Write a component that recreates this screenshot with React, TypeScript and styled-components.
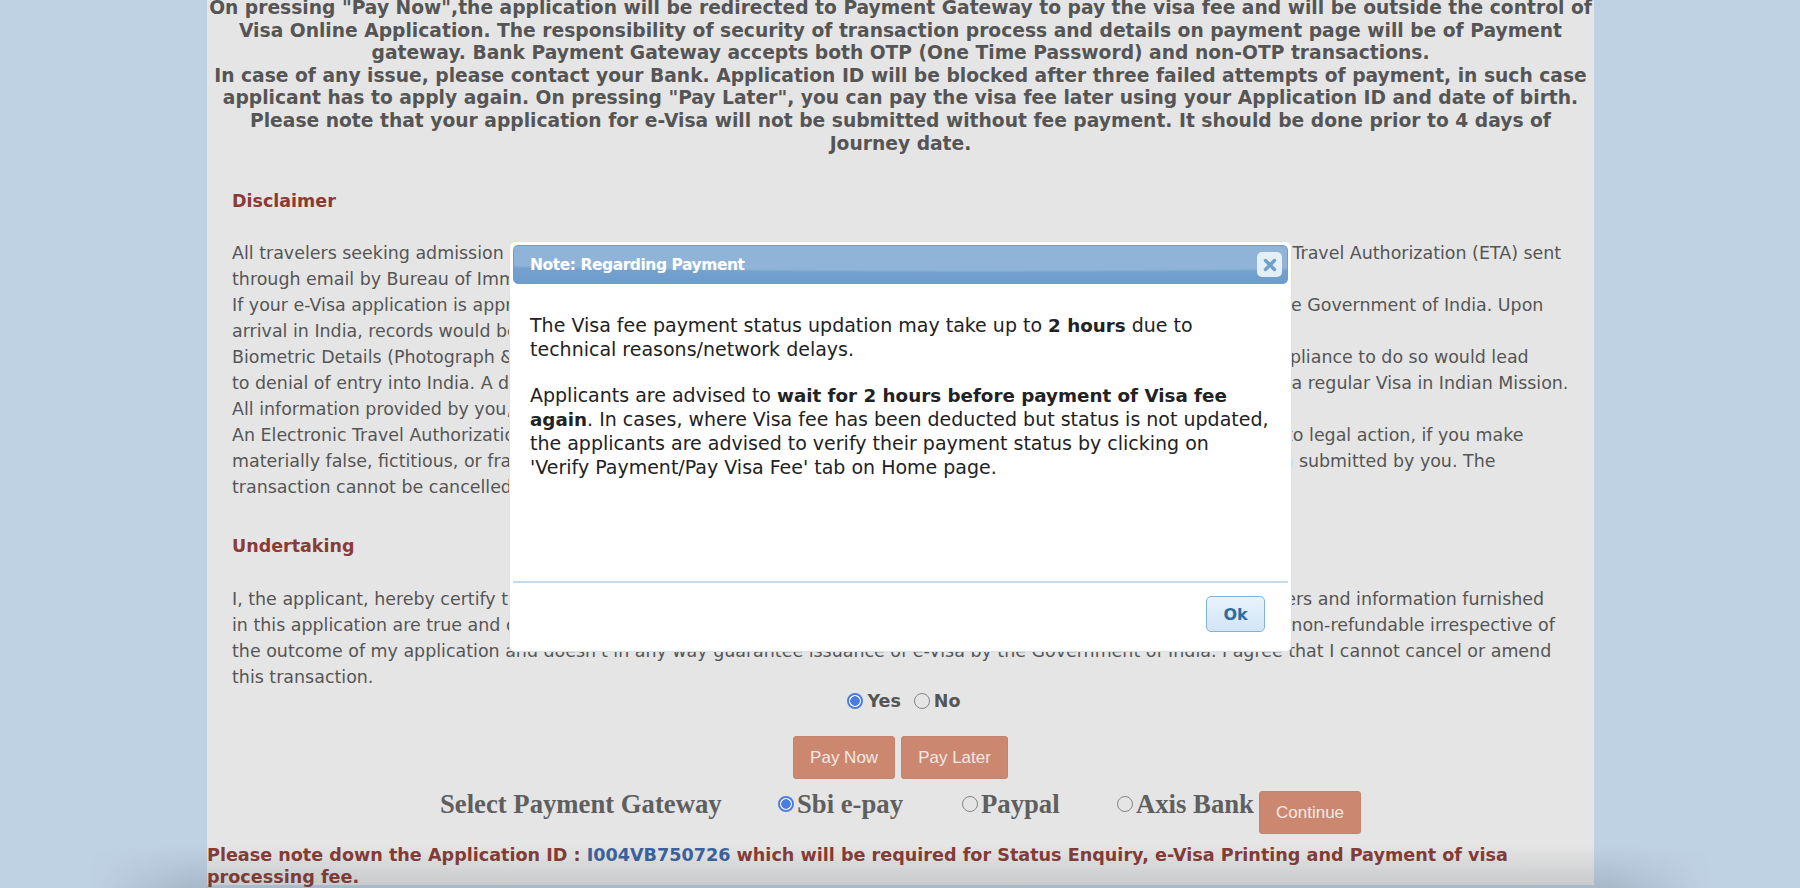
import * as React from 'react';
import styled, { createGlobalStyle } from 'styled-components';
import { X } from 'lucide-react';

const Global = createGlobalStyle`
html, body {
    margin: 0;
    height: 888px;
    overflow: hidden;
    background: #bfd2e4;
}
#root {
    height: 888px;
}
`;

const Page = styled.div`
position: relative;
height: 888px;
overflow: hidden;
font-family: "DejaVu Sans", Verdana, sans-serif;
`;

const Panel = styled.div`
width: 1387px;
height: 888px;
margin-left: 207px;
background: #e5e5e5;
color: #555;
`;

const Notice = styled.p`
margin: -3px 0 0;
font-size: 18.7px;
font-weight: bold;
line-height: 22.6px;
text-align: center;
white-space: nowrap;
`;

const Section = styled.div`
padding: 0 25px;
`;

const Heading = styled.h3<{ $top: number }>`
margin: ${p => p.$top}px 0 0;
font-size: 17.5px;
font-weight: bold;
line-height: 26px;
color: #8b3a34;
`;

const Copy = styled.p<{ $top: number }>`
margin: ${p => p.$top}px 0 0;
font-size: 17.45px;
line-height: 26px;
white-space: nowrap;
`;

const Consent = styled.div`
display: flex;
justify-content: center;
align-items: center;
gap: 13px;
margin: -2px 0 0 7px;
height: 26px;
font-size: 17.5px;
font-weight: bold;
`;

const Radio = styled.input.attrs({ type: 'radio' })`
appearance: none;
box-sizing: border-box;
width: 16px;
height: 16px;
margin: 0;
border: 1.5px solid #858585;
border-radius: 50%;
background: transparent;

&:checked {
    border: 2px solid #4a7de0;
    background: radial-gradient(circle, #4a7de0 0 4.5px, #fff 5px);
}
`;

const ConsentItem = styled.label`
display: flex;
align-items: center;
gap: 4px;
`;

const Actions = styled.div`
display: flex;
justify-content: center;
gap: 6px;
margin: 22px 0 0 0;
`;

const ActionButton = styled.button`
height: 43px;
padding: 0 16px;
border: 1px solid #c4836d;
border-radius: 3px;
background: #cc8770;
color: #f3e9e4;
font-family: "Liberation Sans", Arial, sans-serif;
font-size: 17px;
`;

const ContinueButton = styled(ActionButton)`
margin-top: 1px;
`;

const Gateway = styled.div`
display: flex;
align-items: flex-start;
height: 43px;
margin-top: 11px;
padding-left: 233px;
font-family: "Liberation Serif", Georgia, serif;
font-size: 26.7px;
font-weight: bold;
color: #5f5f5f;
`;

const GatewayLabel = styled.span`
width: 338px;
line-height: 28px;
`;

const GatewayOption = styled.label<{ $width: number }>`
display: flex;
align-items: center;
gap: 3px;
width: ${p => p.$width}px;
height: 28px;
`;

const IdNote = styled.p`
margin: 11px 0 0;
font-size: 17.6px;
font-weight: bold;
line-height: 22px;
color: #863c36;
white-space: nowrap;
`;

const AppId = styled.span`
color: #3a639e;
`;

const DockShade = styled.div`
position: absolute;
left: 90px;
right: 90px;
bottom: 0;
height: 42px;
background: linear-gradient(to bottom, rgba(50, 60, 70, 0), rgba(50, 60, 70, 0.17));
mask-image: linear-gradient(to right, transparent 0, #000 100px, #000 calc(100% - 100px), transparent 100%);
pointer-events: none;
`;

const Modal = styled.div`
position: absolute;
left: 509px;
top: 241px;
width: 783px;
height: 411px;
box-sizing: border-box;
padding: 3px;
background: #fff;
border: 1px solid #d5e4f0;
border-radius: 6px;
color: #222;
`;

const ModalHeader = styled.div`
display: flex;
align-items: center;
justify-content: space-between;
height: 39px;
padding: 0 5px 0 16px;
border: 1px solid #6f9ccb;
border-radius: 5px;
box-sizing: border-box;
background:
    radial-gradient(ellipse 110% 72% at 60% 0, #8fb4d8 0 90%, rgba(143, 180, 216, 0) 100%),
    linear-gradient(to bottom, #7ca8d1, #6f9dcc);
color: #fff;
font-size: 15.5px;
font-weight: bold;
letter-spacing: -0.45px;
`;

const CloseButton = styled.button`
display: flex;
align-items: center;
justify-content: center;
width: 25px;
height: 25px;
padding: 0;
border: 0;
border-radius: 5px;
background: #e4eff8;
color: #6f9fce;
`;

const ModalBody = styled.div`
height: 299px;
box-sizing: border-box;
padding: 29px 15px 0 17px;
border-bottom: 2px solid #c5dbec;
font-size: 19px;
line-height: 24px;
white-space: nowrap;

b {
    font-size: 18.3px;
    line-height: 1;
}
`;

const ModalText = styled.p`
margin: 0 0 22px;
`;

const ModalFooter = styled.div`
display: flex;
justify-content: flex-end;
padding: 13px 23px 0 0;
`;

const OkButton = styled.button`
width: 59px;
height: 36px;
padding: 0;
border: 1px solid #7fb0e2;
border-radius: 5px;
background: linear-gradient(to bottom, #e8f2fb, #d3e5f6);
color: #2e6e9e;
font-family: "DejaVu Sans", Verdana, sans-serif;
font-size: 16px;
font-weight: bold;
`;

const App: React.FC = () => {
    return (
        <Page>
            <Global />
            <Panel>
                <Notice>
                    On pressing "Pay Now",the application will be redirected to Payment Gateway to pay the visa fee and will be outside the control of<br />
                    Visa Online Application. The responsibility of security of transaction process and details on payment page will be of Payment<br />
                    gateway. Bank Payment Gateway accepts both OTP (One Time Password) and non-OTP transactions.<br />
                    In case of any issue, please contact your Bank. Application ID will be blocked after three failed attempts of payment, in such case<br />
                    applicant has to apply again. On pressing "Pay Later", you can pay the visa fee later using your Application ID and date of birth.<br />
                    Please note that your application for e-Visa will not be submitted without fee payment. It should be done prior to 4 days of<br />
                    Journey date.
                </Notice>
                <Section>
                    <Heading $top={33}>Disclaimer</Heading>
                    <Copy $top={26}>
                        All travelers seeking admission to India are required to possess a valid ordinary passport and also an e-Visa or Electronic Travel Authorization (ETA) sent<br />
                        through email by Bureau of Immigration, Ministry of Home Affairs, Government of India.<br />
                        If your e-Visa application is approved, it will be valid for the total visa period granted subject to the rules and orders of the Government of India. Upon<br />
                        arrival in India, records would be checked by the immigration officer at the port of entry.<br />
                        Biometric Details (Photograph &amp; fingerprints) of the travelers shall be captured at the immigration check posts. Non compliance to do so would lead<br />
                        to denial of entry into India. A denied traveler will be sent back on the same flight to country of origin and may apply for a regular Visa in Indian Mission.<br />
                        All information provided by you, or on your behalf, must be true and correct.<br />
                        An Electronic Travel Authorization does not guarantee entry and it may be revoked at all times, and you may be subject to legal action, if you make<br />
                        materially false, fictitious, or fraudulent statements or representations in any other documents or in an e-Visa application submitted by you. The<br />
                        transaction cannot be cancelled once the fee has been paid.
                    </Copy>
                    <Heading $top={33}>Undertaking</Heading>
                    <Copy $top={27}>
                        I, the applicant, hereby certify that I have read and fully understood the terms and conditions of this e-Visa. All the answers and information furnished<br />
                        in this application are true and correct to the best of my knowledge. The e-Visa processing fee once paid by me online is non-refundable irrespective of<br />
                        the outcome of my application and doesn't in any way guarantee issuance of e-Visa by the Government of India. I agree that I cannot cancel or amend<br />
                        this transaction.
                    </Copy>
                </Section>
                <Consent>
                    <ConsentItem><Radio name="agree" defaultChecked />Yes</ConsentItem>
                    <ConsentItem><Radio name="agree" />No</ConsentItem>
                </Consent>
                <Actions>
                    <ActionButton>Pay Now</ActionButton>
                    <ActionButton>Pay Later</ActionButton>
                </Actions>
                <Gateway>
                    <GatewayLabel>Select Payment Gateway</GatewayLabel>
                    <GatewayOption $width={184}><Radio name="gateway" defaultChecked />Sbi e-pay</GatewayOption>
                    <GatewayOption $width={155}><Radio name="gateway" />Paypal</GatewayOption>
                    <GatewayOption $width={142}><Radio name="gateway" />Axis Bank</GatewayOption>
                    <ContinueButton>Continue</ContinueButton>
                </Gateway>
                <IdNote>
                    Please note down the Application ID : <AppId>I004VB750726</AppId> which will be required for Status Enquiry, e-Visa Printing and Payment of visa<br />
                    processing fee.
                </IdNote>
            </Panel>
            <DockShade />
            <Modal>
                <ModalHeader>
                    Note: Regarding Payment
                    <CloseButton><X size={18} strokeWidth={4.5} /></CloseButton>
                </ModalHeader>
                <ModalBody>
                    <ModalText>
                        The Visa fee payment status updation may take up to <b>2 hours</b> due to<br />
                        technical reasons/network delays.
                    </ModalText>
                    <ModalText>
                        Applicants are advised to <b>wait for 2 hours before payment of Visa fee<br />
                        again</b>. In cases, where Visa fee has been deducted but status is not updated,<br />
                        the applicants are advised to verify their payment status by clicking on<br />
                        'Verify Payment/Pay Visa Fee' tab on Home page.
                    </ModalText>
                </ModalBody>
                <ModalFooter>
                    <OkButton>Ok</OkButton>
                </ModalFooter>
            </Modal>
        </Page>
    );
};

export default App;
